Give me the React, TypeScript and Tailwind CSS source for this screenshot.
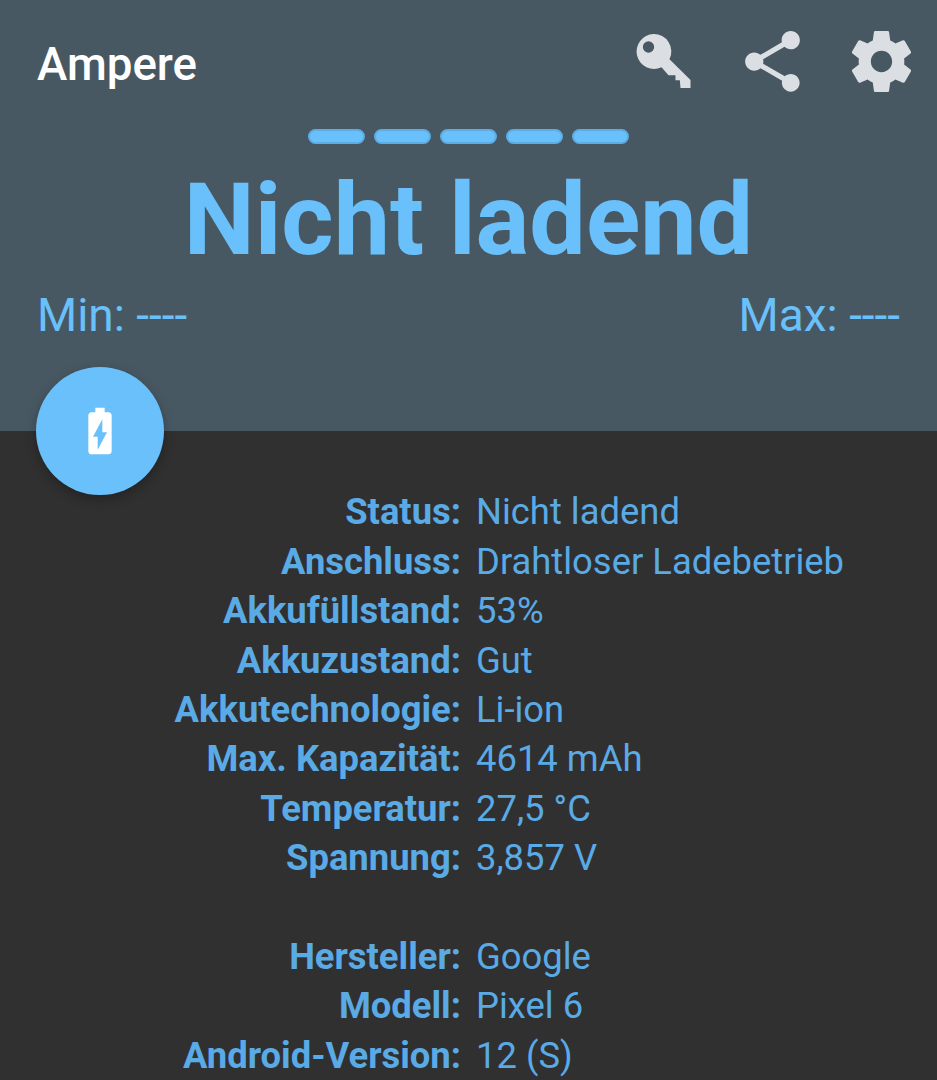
import { MdBatteryChargingFull, MdShare } from "react-icons/md";

type Detail = {
  label: string;
  value: string;
};

const batteryDetails: Detail[] = [
  { label: "Status:", value: "Nicht ladend" },
  { label: "Anschluss:", value: "Drahtloser Ladebetrieb" },
  { label: "Akkufüllstand:", value: "53%" },
  { label: "Akkuzustand:", value: "Gut" },
  { label: "Akkutechnologie:", value: "Li-ion" },
  { label: "Max. Kapazität:", value: "4614 mAh" },
  { label: "Temperatur:", value: "27,5 °C" },
  { label: "Spannung:", value: "3,857 V" },
];

const deviceDetails: Detail[] = [
  { label: "Hersteller:", value: "Google" },
  { label: "Modell:", value: "Pixel 6" },
  { label: "Android-Version:", value: "12 (S)" },
];

const KeyIcon: React.FC = () => (
  <svg viewBox="22.5 30 219 219" className="size-[73px]" fill="currentColor">
    <path
      fillRule="evenodd"
      d="M102 57a52.5 52.5 0 0 1 48 76L213 195V219H183L181 196H168V181H147L126 157A52.5 52.5 0 1 1 102 57ZM87 79a17 17 0 1 0 0 34a17 17 0 0 0 0-34Z"
    />
  </svg>
);

const SettingsIcon: React.FC = () => (
  <svg viewBox="0 0 24 24" className="size-[73px]" fill="currentColor">
    <path d="M19.43 12.98c.04-.32.07-.64.07-.98s-.03-.66-.07-.98l2.11-1.65c.19-.15.24-.42.12-.64l-2-3.46c-.12-.22-.39-.3-.61-.22l-2.49 1c-.52-.4-1.08-.73-1.69-.98l-.38-2.65C14.46 2.18 14.25 2 14 2h-4c-.25 0-.46.18-.49.42l-.38 2.65c-.61.25-1.17.59-1.69.98l-2.49-1c-.23-.09-.49 0-.61.22l-2 3.46c-.13.22-.07.49.12.64l2.11 1.65c-.04.32-.07.65-.07.98s.03.66.07.98l-2.11 1.65c-.19.15-.24.42-.12.64l2 3.46c.12.22.39.3.61.22l2.49-1c.52.4 1.08.73 1.69.98l.38 2.65c.03.24.24.42.49.42h4c.25 0 .46-.18.49-.42l.38-2.65c.61-.25 1.17-.59 1.69-.98l2.49 1c.23.09.49 0 .61-.22l2-3.46c.12-.22.07-.49-.12-.64l-2.11-1.65zM12 15.5c-1.93 0-3.5-1.57-3.5-3.5s1.57-3.5 3.5-3.5 3.5 1.57 3.5 3.5-1.57 3.5-3.5 3.5z" />
  </svg>
);

const DetailList: React.FC<{ details: Detail[] }> = ({ details }) => (
  <dl>
    {details.map((detail) => (
      <div
        key={detail.label}
        className="grid h-[49.4px] grid-cols-[461px_1fr] items-center gap-x-[15px] text-[36.4px] leading-none"
      >
        <dt className="text-right font-bold whitespace-nowrap">
          {detail.label}
        </dt>
        <dd className="whitespace-nowrap">{detail.value}</dd>
      </div>
    ))}
  </dl>
);

const App: React.FC = () => {
  return (
    <div className="h-[1080px] w-[937px] overflow-hidden bg-[#303030] font-[Roboto,sans-serif] text-[#5aaae6]">
      <header className="relative h-[431px] bg-[#485862] text-[#69c0fa]">
        <div className="flex h-[123px] items-center justify-between pr-[19px] pl-[37px]">
          <h1 className="pt-1.5 text-[45.7px] leading-none font-medium text-white">
            Ampere
          </h1>
          <div className="flex gap-9 text-[#dbdfe3]">
            <KeyIcon />
            <MdShare className="size-[73px]" />
            <SettingsIcon />
          </div>
        </div>
        <div className="flex justify-center gap-[9px] pt-[6px]">
          {[1, 2, 3, 4, 5].map((bar) => (
            <div
              key={bar}
              className="h-[15px] w-[57px] rounded-full border-2 border-[#5cade6] bg-[#69c0fa]"
            />
          ))}
        </div>
        <p className="mt-[26px] text-center text-[100.5px] leading-none font-bold whitespace-nowrap">
          Nicht ladend
        </p>
        <div className="mt-[21.5px] flex justify-between px-[37px] text-[46px] leading-none">
          <span>Min: ----</span>
          <span>Max: ----</span>
        </div>
        <button className="absolute -bottom-16 left-[36px] flex size-32 items-center justify-center rounded-full bg-[#69c0fa] text-white shadow-[0_4px_12px_rgba(0,0,0,0.28)]">
          <MdBatteryChargingFull className="size-14" />
        </button>
      </header>
      <main className="flex flex-col gap-[49.4px] pt-[57px]">
        <DetailList details={batteryDetails} />
        <DetailList details={deviceDetails} />
      </main>
    </div>
  );
};

export default App;
